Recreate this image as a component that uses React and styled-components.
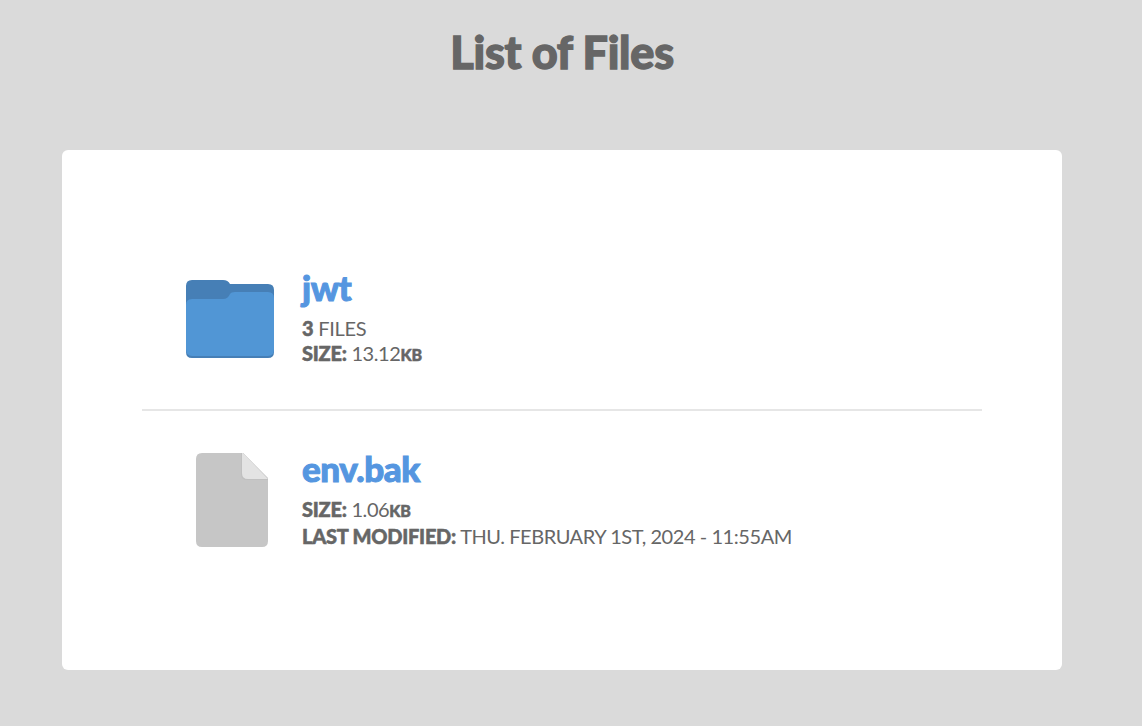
import React from 'react';
import styled, { createGlobalStyle } from 'styled-components';

const Global = createGlobalStyle`
  body { margin: 0; background: #dadada; color: #666; font-family: Lato, sans-serif; }
`;
const Page = styled.main`
  box-sizing: border-box;
  width: 1124px;
  height: 726px;
  padding: 25px 62px 0;
`;
const Title = styled.h1`
  margin: 0 0 71px;
  font-family: "Lato Black", Lato, sans-serif;
  font-size: 45px;
  line-height: 54px;
  font-weight: 900;
  letter-spacing: -0.25px;
  -webkit-text-stroke: 1.3px currentColor;
  text-align: center;
`;
const Panel = styled.section`
  box-sizing: border-box;
  height: 520px;
  padding: 80px;
  background: #fff;
  border-radius: 6px;
`;
const Entry = styled.article`
  box-sizing: border-box;
  display: flex;
  height: 179px;
  padding: 38px 40px 0;
  & + & { border-top: 2px solid #e6e6e6; height: 181px; padding-top: 39px; }
`;
const Icon = styled.svg`
  width: 100px;
  height: 100px;
  flex: none;
  margin-right: 20px;
`;
const Info = styled.div`
  margin-top: ${({ $top = -2 }) => $top}px;
`;
const Name = styled.h2`
  margin: 0 0 8px;
  color: #5596e0;
  font-family: "Lato Black", Lato, sans-serif;
  font-size: 35px;
  line-height: 42px;
  font-weight: 900;
  letter-spacing: -0.45px;
  -webkit-text-stroke: 1px currentColor;
`;
const Detail = styled.div`
  font-size: 20px;
  line-height: ${({ $line = 25 }) => $line}px;
  letter-spacing: ${({ $tracking = -0.4 }) => $tracking}px;
  text-transform: uppercase;
  white-space: nowrap;
`;
const Label = styled.b`
  font-family: "Lato Black", Lato, sans-serif;
  font-weight: 900;
  letter-spacing: -0.25px;
  -webkit-text-stroke: 0.5px currentColor;
`;
const Unit = styled(Label)`
  font-size: 16px;
  line-height: 0;
`;

export default function App() {
  return (
    <Page>
      <Global />
      <Title>List of Files</Title>
      <Panel>
        <Entry>
          <Icon viewBox="0 0 100 100">
            <path fill="#467fb6" d="M4 18q0-6 6-6h31q5 0 7 4h38q6 0 6 6v62q0 6-6 6H10q-6 0-6-6z" />
            <path fill="#5196d5" d="M4 37q0-6 6-6h31q5 0 7-5q1-2 5-2h33q6 0 6 6v51q0 7-6 7H10q-6 0-6-7z" />
          </Icon>
          <Info>
            <Name>jwt</Name>
            <Detail $tracking={-0.3}><Label>3</Label> Files</Detail>
            <Detail><Label>Size:</Label> 13.12<Unit>KB</Unit></Detail>
          </Info>
        </Entry>
        <Entry>
          <Icon viewBox="0 0 100 100">
            <path fill="#c6c6c6" d="M14 9q0-6 6-6h41l25 26v62q0 6-6 6H20q-6 0-6-6z" />
            <path fill="#c0c0c0" d="M59 3v21q0 6 6 6h21v-2L61 3z" />
            <path fill="#e3e3e3" d="M60 3h1l25 26H66q-6 0-6-6z" />
          </Icon>
          <Info $top={-3}>
            <Name>env.bak</Name>
            <Detail><Label>Size:</Label> 1.06<Unit>KB</Unit></Detail>
            <Detail $line={28} $tracking={-0.44}><Label>Last modified:</Label> Thu. February 1st, 2024 - 11:55am</Detail>
          </Info>
        </Entry>
      </Panel>
    </Page>
  );
}
